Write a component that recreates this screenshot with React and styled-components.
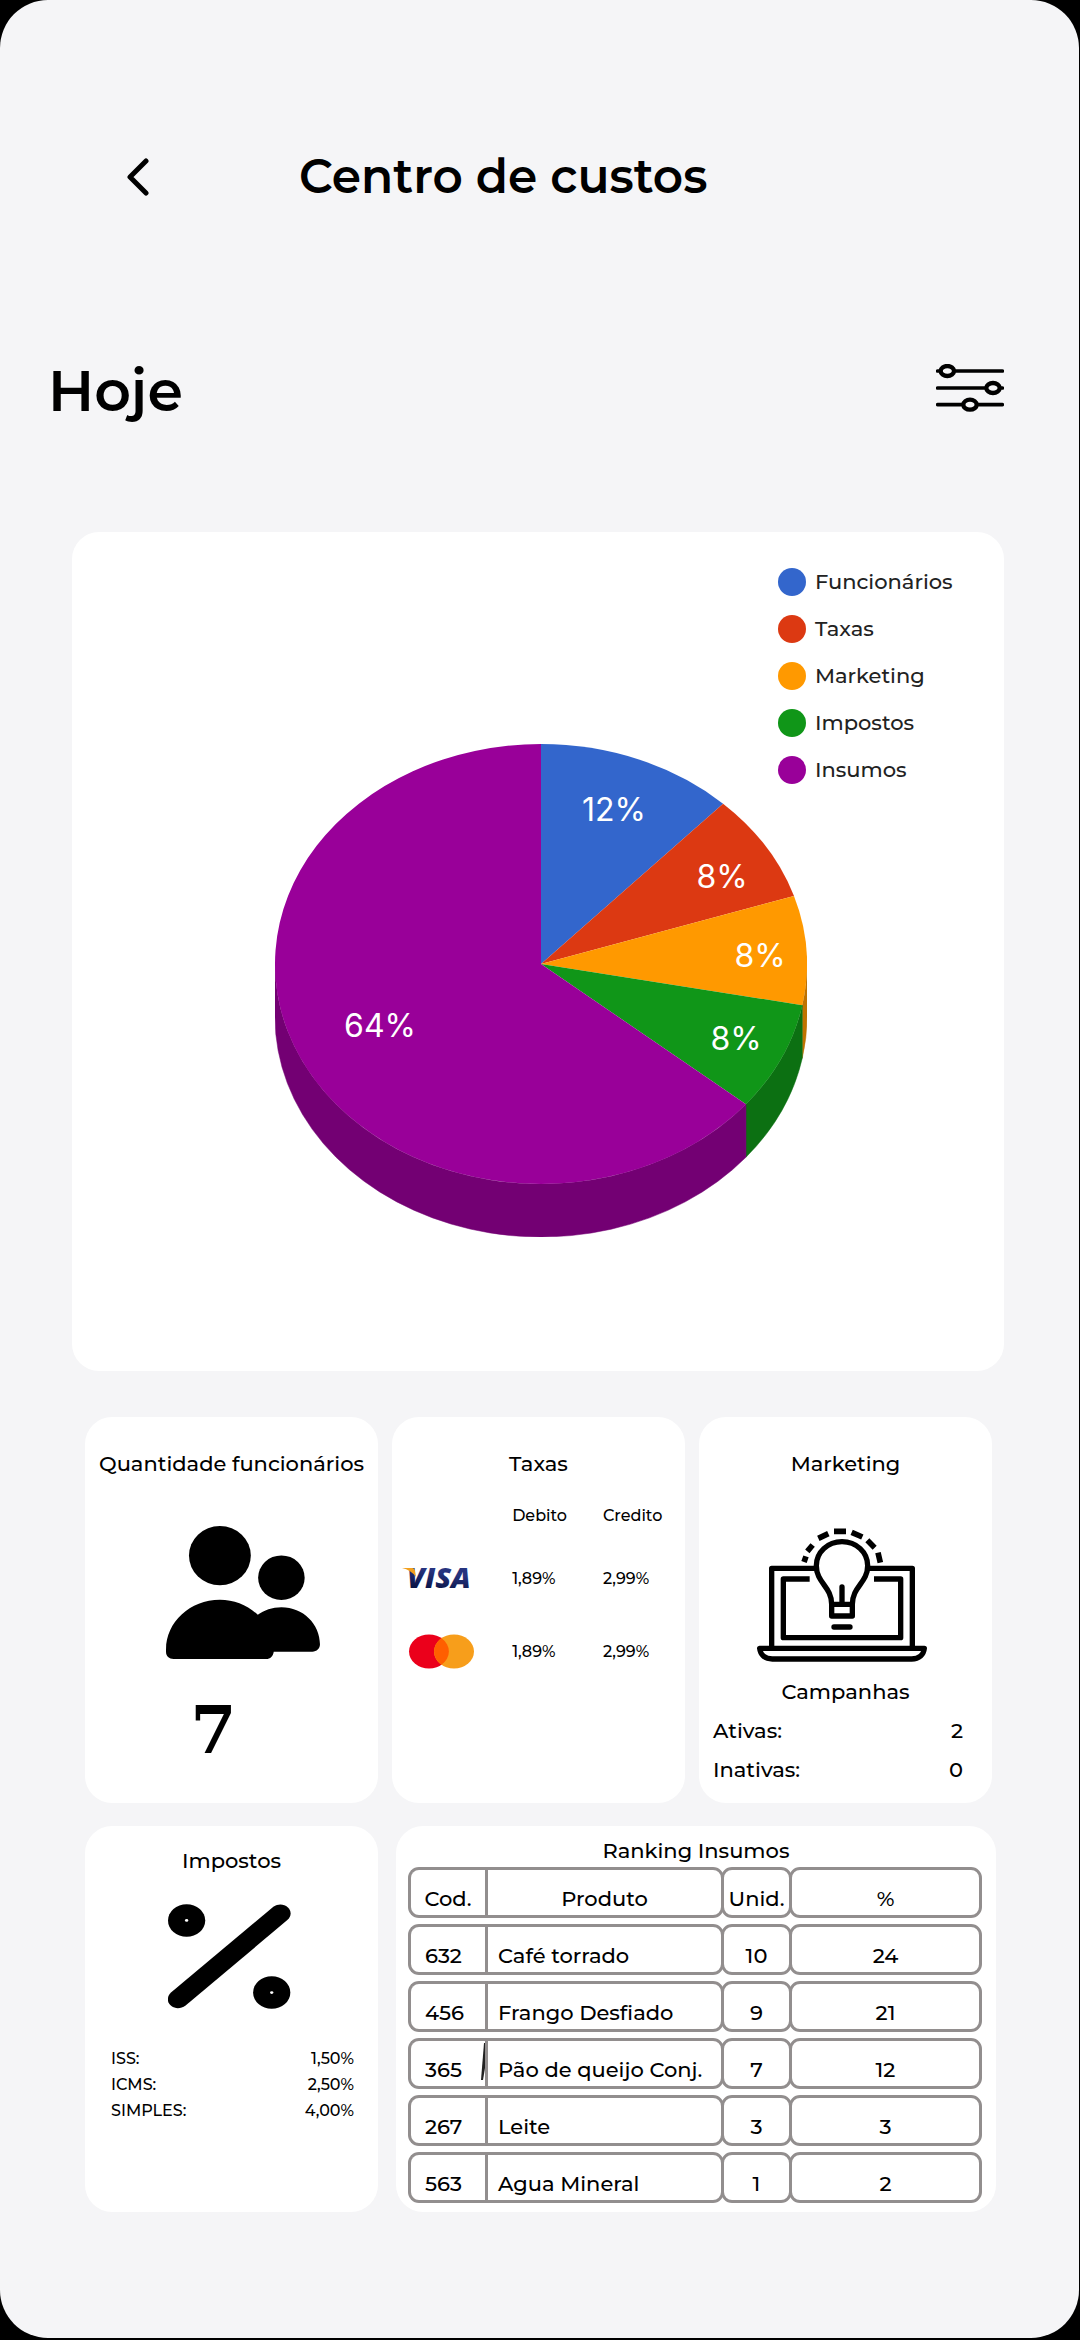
import React from "react";
import styled, { createGlobalStyle } from "styled-components";

const GlobalStyle = createGlobalStyle`
  *, *::before, *::after { box-sizing: border-box; }
  html, body { margin: 0; background: #000; }
  body { font-family: "Montserrat", "Inter", "Liberation Sans", sans-serif; color: #000; }
  h1, h2, h3, p, ul, dl, dd { margin: 0; padding: 0; }
  svg { display: block; }
`;

const Screen = styled.main`
  margin-right: 1px;
  padding: 145px 0 126px;
  border-radius: 48px;
  background: #f5f5f7;
`;

const Header = styled.header`
  display: flex;
  align-items: center;
  gap: 142px;
  padding: 2px 119px 0;
`;

const IconButton = styled.button`
  display: flex;
  flex: none;
  padding: ${(p) => p.$pad || 0}px;
  border: 0;
  background: none;
  color: inherit;
  cursor: pointer;
`;

const PageTitle = styled.h1`
  font-size: 47px;
  font-weight: 600;
  line-height: 60px;
`;

const Period = styled.section`
  display: flex;
  align-items: center;
  justify-content: space-between;
  margin-top: 148px;
  padding: 0 75px 0 48px;
`;

const PeriodTitle = styled.h2`
  font-size: 57px;
  font-weight: 600;
  line-height: 72px;
`;

const Card = styled.section`
  border-radius: 27px;
  background: #fff;
`;

const ChartCard = styled(Card)`
  display: grid;
  margin: 105px 75px 0 72px;
  padding: 36px 36px 134px 42px;
  & > * { grid-area: 1 / 1; }
`;

const Pie = styled.svg`
  justify-self: center;
  margin-top: 176px;
  font-family: "Inter", sans-serif;
  font-size: 32px;
  font-weight: 400;
`;

const Legend = styled.ul`
  display: flex;
  flex-direction: column;
  gap: 19px;
  justify-self: end;
  width: 190px;
  list-style: none;
`;

const LegendItem = styled.li`
  display: flex;
  align-items: center;
  gap: 9px;
  color: #222;
  font-size: 21px;
  font-weight: 500;
  line-height: 28px;
  &::before {
    content: "";
    flex: none;
    width: 28px;
    height: 28px;
    border-radius: 50%;
    background: ${(p) => p.$color};
  }
`;

const CardRow = styled.div`
  display: grid;
  grid-template-columns: ${(p) => p.$columns};
  gap: ${(p) => p.$gap}px;
  margin: ${(p) => p.$margin};
`;

const InfoCard = styled(Card)`
  display: flex;
  flex-direction: column;
  min-width: 0;
  min-height: 386px;
  padding-top: ${(p) => p.$top}px;
`;

const CardTitle = styled.h3`
  font-size: 21px;
  font-weight: 500;
  line-height: 28px;
  text-align: center;
  white-space: nowrap;
`;

const Figure = styled.div`
  display: flex;
  justify-content: center;
  padding: ${(p) => p.$padding};
`;

const Count = styled.p`
  padding-right: 36px;
  font-family: "DejaVu Serif", serif;
  font-size: 66px;
  font-weight: 700;
  line-height: 72px;
  text-align: center;
`;

const FeeTable = styled.table`
  width: 100%;
  margin-top: 28px;
  border-collapse: collapse;
  table-layout: fixed;
  font-size: 16px;
  line-height: 20px;
  th, td { padding: 0; font-weight: 500; text-align: left; }
  thead th { height: 36px; vertical-align: top; }
  tbody tr { height: 73px; }
`;

const FeeColumn = styled.col`
  width: ${(p) => p.$width};
`;

const BrandCell = styled.th`
  svg { margin-left: 10px; }
`;

const Facts = styled.dl`
  display: flex;
  flex-direction: column;
  gap: ${(p) => p.$gap}px;
  padding: ${(p) => p.$padding};
  font-size: ${(p) => p.$size}px;
  font-weight: 500;
  line-height: ${(p) => p.$line}px;
`;

const Fact = styled.div`
  display: flex;
  justify-content: space-between;
`;

const Ranking = styled.table`
  display: block;
  padding: 2px 14px 0 12px;
  font-size: 21px;
  line-height: 28px;
  thead, tbody { display: grid; gap: 6px; }
  tbody { margin-top: 6px; }
`;

const RankingRow = styled.tr`
  display: grid;
  grid-template-columns: 77px 239px 68px minmax(0, 1fr);
`;

const rankingCell = `
  padding: 15px 0 2px;
  border: 3px solid #928e8e;
  border-radius: 11px;
  font-weight: 500;
  text-align: center;
  white-space: nowrap;
  &:nth-child(1) { position: relative; border-right-width: 0; border-radius: 11px 0 0 11px; }
  &:nth-child(2) { border-radius: 0 11px 11px 0; }
  &:nth-child(n + 3) { margin-left: -3px; }
`;

const HeadCell = styled.th`
  ${rankingCell}
`;

const Cell = styled.td`
  ${rankingCell}
  &:nth-child(1) { padding-left: 14px; text-align: left; }
  &:nth-child(2) { padding-left: 10px; text-align: left; }
`;

const PenMark = styled.svg`
  position: absolute;
  top: 2px;
  right: 0;
`;

const slices = [
  { label: "Funcionários", value: 12, color: "#3366cc", x: 339, y: 77 },
  { label: "Taxas", value: 8, color: "#dc3912", x: 447, y: 144 },
  { label: "Marketing", value: 8, color: "#ff9900", side: "#bf7300", x: 485, y: 223 },
  { label: "Impostos", value: 8, color: "#109618", side: "#0c7012", x: 461, y: 306 },
  { label: "Insumos", value: 64, color: "#990099", side: "#730073", x: 105, y: 293 },
];

const CX = 266;
const CY = 220;
const RX = 266;
const RY = 220;
const DEPTH = 53;

const pointAt = (share) => {
  const angle = (share / 100) * Math.PI * 2;
  return [CX + RX * Math.sin(angle), CY - RY * Math.cos(angle)];
};

function CostPie() {
  let start = 0;
  const parts = slices.map((slice) => {
    const end = start + slice.value;
    const [x1, y1] = pointAt(start);
    const [x2, y2] = pointAt(end);
    const top = `M${CX} ${CY}L${x1} ${y1}A${RX} ${RY} 0 ${slice.value > 50 ? 1 : 0} 1 ${x2} ${y2}Z`;
    let wall = null;
    if (slice.side) {
      const [a, b] = pointAt(Math.max(start, 25));
      const [c, d] = pointAt(Math.min(end, 75));
      wall = `M${a} ${b}A${RX} ${RY} 0 0 1 ${c} ${d}V${d + DEPTH}A${RX} ${RY} 0 0 0 ${a} ${b + DEPTH}Z`;
    }
    start = end;
    return { ...slice, top, wall };
  });
  return (
    <Pie width="532" height="493" viewBox="0 0 532 493" role="img" aria-label="Custos por categoria">
      {parts.map((p) => p.wall && <path key={p.label} d={p.wall} fill={p.side} stroke={p.side} strokeWidth="0.5" />)}
      {parts.map((p) => <path key={p.label} d={p.top} fill={p.color} />)}
      {parts.map((p) => (
        <text key={p.label} x={p.x} y={p.y} fill="#fff" textAnchor="middle">{p.value}%</text>
      ))}
    </Pie>
  );
}

const BackIcon = () => (
  <svg width="22" height="38" viewBox="0 0 22 38" fill="none" stroke="#000" strokeWidth="5" strokeLinecap="round" strokeLinejoin="round">
    <path d="M19 3L3 19L19 35" />
  </svg>
);

const FilterIcon = () => (
  <svg width="68" height="54" viewBox="108 72 204 162" fill="none" stroke="#000">
    <path d="M113 93H307M113 144H307M113 194H307" strokeWidth="11" strokeLinecap="round" />
    <g fill="#f5f5f7" strokeWidth="13">
      <ellipse cx="142" cy="93" rx="20" ry="15" />
      <ellipse cx="279" cy="144" rx="20" ry="15" />
      <ellipse cx="210" cy="194" rx="20" ry="15" />
    </g>
  </svg>
);

const PeopleIcon = () => (
  <svg width="154" height="133" viewBox="318 378 463 400">
    <ellipse cx="480" cy="467" rx="93" ry="89" />
    <ellipse cx="665" cy="533.5" rx="70" ry="67" />
    <path d="M318 749C318 668 390 600 480 600C524 600 564 617 594 645C612 631 638 622 665 622C730 622 781 672 781 734C781 747 771 756 758 756H642C640 769 632 778 619 778H341C327 778 318 769 318 757Z" />
  </svg>
);

const VisaLogo = () => (
  <svg width="78" height="44" viewBox="0 0 78 44" role="img" aria-label="Visa">
    <defs>
      <linearGradient id="visa" x1="0" y1="1" x2="0.25" y2="0">
        <stop offset="0.25" stopColor="#0a1445" />
        <stop offset="0.7" stopColor="#26347f" />
      </linearGradient>
    </defs>
    <text x="5" y="31" fill="url(#visa)" fontFamily="Open Sans, sans-serif" fontSize="29" fontWeight="800" fontStyle="italic">VISA</text>
    <path d="M0 11H10Q12.500 11 13 14L14 20Q9 13 0 11Z" fill="#f2a01e" />
  </svg>
);

const MastercardLogo = () => (
  <svg width="72" height="35" viewBox="0 0 72 35" role="img" aria-label="Mastercard">
    <ellipse cx="27" cy="17.5" rx="20" ry="17" fill="#eb001b" />
    <ellipse cx="52" cy="17.5" rx="20" ry="17" fill="#f79e1b" />
    <path d="M39.500 4.300A20 17 0 0 1 39.500 30.700A20 17 0 0 1 39.500 4.300Z" fill="#ff5f00" />
  </svg>
);

const CampaignIcon = () => (
  <svg width="170" height="134" viewBox="198 385 510 402" fill="none" stroke="#000" strokeWidth="16" strokeLinejoin="round">
    <path d="M376 506H242V745M530 506H664V745" />
    <path d="M356 538H277V714H629V538H549" />
    <path d="M206 746H700C698 765 685 778 662 778H244C221 778 208 765 206 746Z" />
    <path d="M422 614C422 560 376 550 376 498C376 458 410 426 453 426C496 426 530 458 530 498C530 550 484 560 484 614V649H422Z" fill="#fff" />
    <path d="M422 614H484M453 614V562M429 682H477" strokeLinecap="round" />
    <path d="M339 487L345 470M349 455L365 436M382 416L412 402M429 395H465M482 398L514 412M529 422L551 444M561 459L568 489" strokeWidth="17" />
  </svg>
);

const PercentIcon = () => (
  <svg width="123" height="105" viewBox="326 283 370 315">
    <ellipse cx="382" cy="332" rx="56" ry="49" />
    <ellipse cx="638" cy="549" rx="56" ry="49" />
    <path d="M643 291C676 269 713 306 685 331L379 588C346 612 307 577 335 549Z" />
    <ellipse cx="382" cy="332" rx="5" ry="4" fill="#fff" />
    <ellipse cx="638" cy="549" rx="5" ry="4" fill="#fff" />
  </svg>
);

const fees = [
  { brand: <VisaLogo />, debit: "1,89%", credit: "2,99%" },
  { brand: <MastercardLogo />, debit: "1,89%", credit: "2,99%" },
];

const campaigns = [["Ativas:", "2"], ["Inativas:", "0"]];

const taxes = [["ISS:", "1,50%"], ["ICMS:", "2,50%"], ["SIMPLES:", "4,00%"]];

const supplies = [
  ["632", "Café torrado", "10", "24"],
  ["456", "Frango Desfiado", "9", "21"],
  ["365", "Pão de queijo Conj.", "7", "12"],
  ["267", "Leite", "3", "3"],
  ["563", "Agua Mineral", "1", "2"],
];

const FactList = ({ items, ...style }) => (
  <Facts {...style}>
    {items.map(([name, value]) => (
      <Fact key={name}><dt>{name}</dt><dd>{value}</dd></Fact>
    ))}
  </Facts>
);

export default function App() {
  return (
    <>
      <GlobalStyle />
      <Screen>
        <Header>
          <IconButton type="button" aria-label="Voltar" $pad={8}><BackIcon /></IconButton>
          <PageTitle>Centro de custos</PageTitle>
        </Header>

        <Period>
          <PeriodTitle>Hoje</PeriodTitle>
          <IconButton type="button" aria-label="Filtros"><FilterIcon /></IconButton>
        </Period>

        <ChartCard>
          <CostPie />
          <Legend>
            {slices.map((s) => <LegendItem key={s.label} $color={s.color}>{s.label}</LegendItem>)}
          </Legend>
        </ChartCard>

        <CardRow $columns="repeat(3, minmax(0, 1fr))" $gap={14} $margin="46px 87px 0 85px">
          <InfoCard $top={33}>
            <CardTitle>Quantidade funcionários</CardTitle>
            <Figure $padding="48px 0 35px 22px"><PeopleIcon /></Figure>
            <Count>7</Count>
          </InfoCard>

          <InfoCard $top={33}>
            <CardTitle>Taxas</CardTitle>
            <FeeTable>
              <colgroup>
                <FeeColumn $width="41%" />
                <FeeColumn $width="31%" />
                <FeeColumn />
              </colgroup>
              <thead>
                <tr><td /><th scope="col">Debito</th><th scope="col">Credito</th></tr>
              </thead>
              <tbody>
                {fees.map((fee, i) => (
                  <tr key={i}>
                    <BrandCell scope="row">{fee.brand}</BrandCell>
                    <td>{fee.debit}</td>
                    <td>{fee.credit}</td>
                  </tr>
                ))}
              </tbody>
            </FeeTable>
          </InfoCard>

          <InfoCard $top={33}>
            <CardTitle>Marketing</CardTitle>
            <Figure $padding="50px 8px 16px 0"><CampaignIcon /></Figure>
            <CardTitle as="p">Campanhas</CardTitle>
            <FactList items={campaigns} $gap={11} $padding="11px 29px 0 14px" $size={21} $line={28} />
          </InfoCard>
        </CardRow>

        <CardRow $columns="293fr 600fr" $gap={18} $margin="23px 83px 0 85px">
          <InfoCard $top={21}>
            <CardTitle>Impostos</CardTitle>
            <Figure $padding="29px 4px 40px 0"><PercentIcon /></Figure>
            <FactList items={taxes} $gap={6} $padding="0 24px 0 26px" $size={16} $line={20} />
          </InfoCard>

          <InfoCard $top={11}>
            <CardTitle>Ranking Insumos</CardTitle>
            <Ranking>
              <thead>
                <RankingRow>
                  {["Cod.", "Produto", "Unid.", "%"].map((name) => (
                    <HeadCell key={name} scope="col">{name}</HeadCell>
                  ))}
                </RankingRow>
              </thead>
              <tbody>
                {supplies.map(([code, name, units, share]) => (
                  <RankingRow key={code}>
                    <Cell>
                      {code}
                      {code === "365" && (
                        <PenMark width="4" height="37" viewBox="0 0 4 37">
                          <path d="M3 0H4V25L2 37H0Z" fill="#222" />
                        </PenMark>
                      )}
                    </Cell>
                    <Cell>{name}</Cell>
                    <Cell>{units}</Cell>
                    <Cell>{share}</Cell>
                  </RankingRow>
                ))}
              </tbody>
            </Ranking>
          </InfoCard>
        </CardRow>
      </Screen>
    </>
  );
}
